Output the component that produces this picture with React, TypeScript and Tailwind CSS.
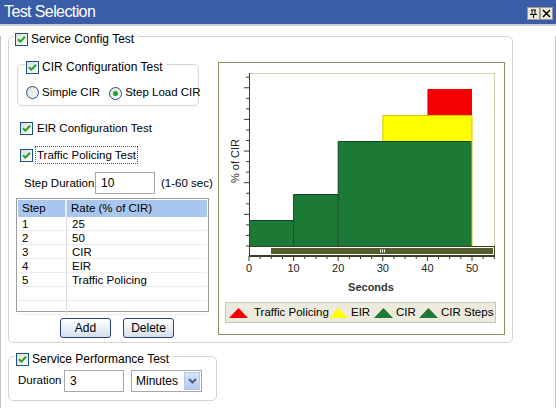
import * as React from "react";

const font = { fontFamily: '"Liberation Sans", Arial, sans-serif' };

/** XP style checkbox with a green tick */
const CheckBox = ({ checked = true }: { checked?: boolean }) => (
  <span className="inline-flex h-[13px] w-[13px] shrink-0 items-center justify-center border border-[#1c5180] bg-gradient-to-br from-[#dcdcd7] to-white">
    {checked && (
      <svg width="9" height="9" viewBox="0 0 9 9">
        <path d="M1 4.2 L3.4 6.6 L8 1.8" fill="none" stroke="#21a121" strokeWidth="2" />
      </svg>
    )}
  </span>
);

const Radio = ({ checked = false }: { checked?: boolean }) => (
  <span className="inline-flex h-[13px] w-[13px] shrink-0 items-center justify-center rounded-full border border-[#1c5180] bg-gradient-to-br from-[#dcdcd7] to-white">
    {checked && <span className="h-[5px] w-[5px] rounded-full bg-[#21a121]" />}
  </span>
);

const Button = ({ label, className = "" }: { label: string; className?: string }) => (
  <button
    className={
      "h-[20px] w-[51px] rounded-[3px] border border-[#23408b] bg-gradient-to-b from-white to-[#d6dfee] text-[12px] leading-none text-black " +
      className
    }
  >
    {label}
  </button>
);

const rows = [
  ["1", "25"],
  ["2", "50"],
  ["3", "CIR"],
  ["4", "EIR"],
  ["5", "Traffic Policing"],
  ["", ""],
  ["", ""],
];

// x scale: 0..55 seconds onto the plot frame
const sx = (t: number) => 30 + t * 4.46;

const Chart = () => {
  const yTicks = [];
  for (let i = 0; i <= 16; i++) {
    const y = 183 - i * 10.55;
    const major = i % 3 === 0 && i > 0;
    yTicks.push(<line key={i} x1={major ? 25 : 27} x2={31} y1={y} y2={y} stroke="#3d3d1f" strokeWidth="1" />);
  }
  const xTicks = [];
  for (let t = 0; t <= 55; t += 2.5) {
    const major = t % 10 === 0;
    xTicks.push(
      <line key={t} x1={sx(t)} x2={sx(t)} y1={193} y2={major ? 198 : 196} stroke="#3d3d1f" strokeWidth="1" />
    );
  }
  return (
    <svg width="285" height="239" className="block">
      {/* plot frame */}
      <rect x="30.5" y="10.5" width="245" height="182" fill="white" stroke="#d3d3a8" />
      {/* bars */}
      <rect x={sx(0)} y="157" width={sx(10) - sx(0)} height="26" fill="#1c7a36" />
      <rect x={sx(10)} y="131" width={sx(20) - sx(10)} height="52" fill="#1c7a36" />
      <rect x={sx(20)} y="78" width={sx(50) - sx(20)} height="105" fill="#1c7a36" />
      <rect x={sx(30)} y="52" width={sx(50) - sx(30)} height="26" fill="#ffff00" />
      <rect x={sx(40)} y="26" width={sx(50) - sx(40)} height="26" fill="#f50000" />
      <path
        d={`M${sx(0)} 157.5 H${sx(10)} V131.5 H${sx(20)} V78.5 H${sx(50)} M${sx(10)} 157 V183 M${sx(20)} 131 V183`}
        fill="none"
        stroke="#0f4a1e"
        strokeWidth="1"
      />
      <path d={`M${sx(30)} 78 V52.5 H${sx(50)} V183`} fill="none" stroke="#d8c400" strokeWidth="1" />
      {/* y axis */}
      <line x1="30.5" x2="30.5" y1="10" y2="183" stroke="#3d3d1f" />
      {yTicks}
      <text
        x="20"
        y="98"
        transform="rotate(-90 20 98)"
        textAnchor="middle"
        fontSize="11"
        fill="#222"
        style={font}
      >
        % of CIR
      </text>
      {/* scroll strip */}
      <rect x="30.5" y="183.5" width="245" height="9" fill="white" stroke="#3d3d1f" />
      <rect x="52" y="185" width="222" height="6" fill="#555c2e" />
      <path d="M161.5 186.5 V189.5 M163.5 186.5 V189.5 M165.5 186.5 V189.5" stroke="white" strokeWidth="1" />
      {/* x axis */}
      <line x1="30" x2="276" y1="193.5" y2="193.5" stroke="#3d3d1f" />
      {xTicks}
      {[0, 10, 20, 30, 40, 50].map((t) => (
        <text key={t} x={sx(t)} y="209" textAnchor="middle" fontSize="11" fill="#222" style={font}>
          {t}
        </text>
      ))}
      <text x="152" y="228" textAnchor="middle" fontSize="11" fill="#333" fontWeight="600" style={font}>
        Seconds
      </text>
    </svg>
  );
};

const Tri = ({ color }: { color: string }) => (
  <svg width="19" height="10" viewBox="0 0 19 10" className="shrink-0">
    <path d="M0 10 L9.5 0 L19 10 Z" fill={color} />
  </svg>
);

export default function App() {
  return (
    <div className="h-[408px] w-[556px] overflow-hidden whitespace-nowrap bg-white text-[11px] text-black" style={font}>
      {/* title bar */}
      <div className="flex h-[26px] items-center justify-between border-b-2 border-[#c9ccd3] bg-[#3b5ca7] pl-[4px] pr-[3px]">
        <span className="text-[16px] tracking-[-0.6px] text-white">Test Selection</span>
        <div className="mt-[2px] flex">
          <span className="flex h-[13px] w-[13px] items-center justify-center border border-[#9a9a9a] bg-[#ece9d8]">
            <svg width="9" height="9" viewBox="0 0 9 9">
              <path d="M2 1 H7 M3 1 V5 M6 1 V5 M1 5.5 H8 M4.5 5.5 V9" stroke="black" strokeWidth="1" fill="none" />
            </svg>
          </span>
          <span className="flex h-[13px] w-[13px] items-center justify-center border border-[#9a9a9a] bg-[#ece9d8]">
            <svg width="9" height="9" viewBox="0 0 9 9">
              <path d="M1 1 L8 8 M8 1 L1 8" stroke="black" strokeWidth="1.5" fill="none" />
            </svg>
          </span>
        </div>
      </div>

      <div className="h-[380px] border-x border-[#c2c2c2]">
        {/* Service Config Test group */}
        <div className="relative ml-[7px] mt-[10px] h-[307px] w-[505px] rounded-[5px] border border-[#d4d4d0]">
          <div className="absolute left-[5px] top-[-7px] flex items-center gap-[3px] bg-white pl-[1px] pr-[4px]">
            <CheckBox />
            <span className="text-[12px]">Service Config Test</span>
          </div>

          <div className="flex pl-[7px] pt-[25px]">
            {/* left column */}
            <div className="flex w-[193px] flex-col pt-[2px]">
              <div className="relative ml-[1px] h-[42px] w-[182px] rounded-[5px] border border-[#d4d4d0]">
                <div className="absolute left-[7px] top-[-7px] flex items-center gap-[3px] bg-white pl-[1px] pr-[4px]">
                  <CheckBox />
                  <span className="text-[12px]">CIR Configuration Test</span>
                </div>
                <div className="flex items-center pl-[8px] pt-[19px]">
                  <Radio />
                  <span className="ml-[3px] text-[11.5px]">Simple CIR</span>
                  <span className="ml-[9px]">
                    <Radio checked />
                  </span>
                  <span className="ml-[3px] text-[11.5px]">Step Load CIR</span>
                </div>
              </div>

              <div className="ml-[4px] mt-[14px] flex items-center gap-[4px]">
                <CheckBox />
                <span className="text-[11.5px]">EIR Configuration Test</span>
              </div>
              <div className="ml-[4px] mt-[9px] flex items-center gap-[2px]">
                <CheckBox />
                <span className="border border-dotted border-[#555] px-[1px] py-[1px] text-[11.5px] leading-[14px]">
                  Traffic Policing Test
                </span>
              </div>

              <div className="mt-[8px] flex items-center">
                <span className="ml-[8px] w-[71px] shrink-0 text-[11.5px]">Step Duration</span>
                <div className="flex h-[22px] w-[60px] shrink-0 items-center border border-[#a7a7a7] pl-[5px] text-[12px]">10</div>
                <span className="ml-[6px] text-[11.5px]">(1-60 sec)</span>
              </div>

              {/* step table */}
              <div className="mt-[4px] h-[114px] w-[193px] border border-[#9c9c9c] p-[1px]">
                <div className="flex h-[17px] w-[189px] bg-[#a9c7ee] text-[11.5px]">
                  <div className="flex w-[49px] items-center border-r-2 border-[#e4ecf8] pl-[4px]">Step</div>
                  <div className="flex flex-1 items-center pl-[4px]">Rate (% of CIR)</div>
                </div>
                {rows.map((r, i) => (
                  <div key={i} className="flex h-[14px] border-b border-[#ececec] text-[11.5px] leading-[14px]">
                    <div className="w-[49px] border-r border-[#dcdcdc] pl-[4px]">{r[0]}</div>
                    <div className="flex-1 pl-[5px]">{r[1]}</div>
                  </div>
                ))}
              </div>

              <div className="mt-[6px] flex">
                <Button label="Add" className="ml-[44px]" />
                <Button label="Delete" className="ml-[12px]" />
              </div>
            </div>

            {/* chart panel */}
            <div className="ml-[9px] flex h-[273px] w-[287px] flex-col border border-[#8e8e60]">
              <Chart />
              <div className="ml-[6px] flex h-[21px] w-[271px] items-center border border-[#cbc9ad] bg-[#ecebdd] pl-[3px] text-[11.5px]">
                <div className="flex w-[100px] items-center">
                  <Tri color="#f50000" />
                  <span className="ml-[6px]">Traffic Policing</span>
                </div>
                <div className="flex w-[45px] items-center">
                  <Tri color="#ffff00" />
                  <span className="ml-[3px]">EIR</span>
                </div>
                <div className="flex w-[45px] items-center">
                  <Tri color="#1c7a36" />
                  <span className="ml-[3px]">CIR</span>
                </div>
                <div className="flex items-center">
                  <Tri color="#1c7a36" />
                  <span className="ml-[3px]">CIR Steps</span>
                </div>
              </div>
            </div>
          </div>
        </div>

        {/* Service Performance Test group */}
        <div className="relative ml-[7px] mt-[13px] h-[45px] w-[209px] rounded-[5px] border border-[#d4d4d0]">
          <div className="absolute left-[6px] top-[-7px] flex items-center gap-[3px] bg-white pl-[1px] pr-[4px]">
            <CheckBox />
            <span className="text-[12px]">Service Performance Test</span>
          </div>
          <div className="flex items-center pl-[9px] pt-[13px]">
            <span className="w-[46px] shrink-0 text-[11.5px]">Duration</span>
            <div className="flex h-[22px] w-[60px] shrink-0 items-center border border-[#a7a7a7] pl-[5px] text-[12px]">3</div>
            <div className="ml-[7px] flex h-[22px] w-[71px] shrink-0 items-center border border-[#a7a7a7] p-[1px]">
              <span className="flex-1 pl-[3px] text-[12px]">Minutes</span>
              <span className="flex h-[18px] w-[16px] items-center justify-center border border-[#b5c6e6] bg-gradient-to-b from-[#d7e3fb] to-[#b3c8f2]">
                <svg width="9" height="6" viewBox="0 0 9 6">
                  <path d="M1 1 L4.5 4.5 L8 1" fill="none" stroke="#4d6185" strokeWidth="2" />
                </svg>
              </span>
            </div>
          </div>
        </div>
      </div>
    </div>
  );
}
